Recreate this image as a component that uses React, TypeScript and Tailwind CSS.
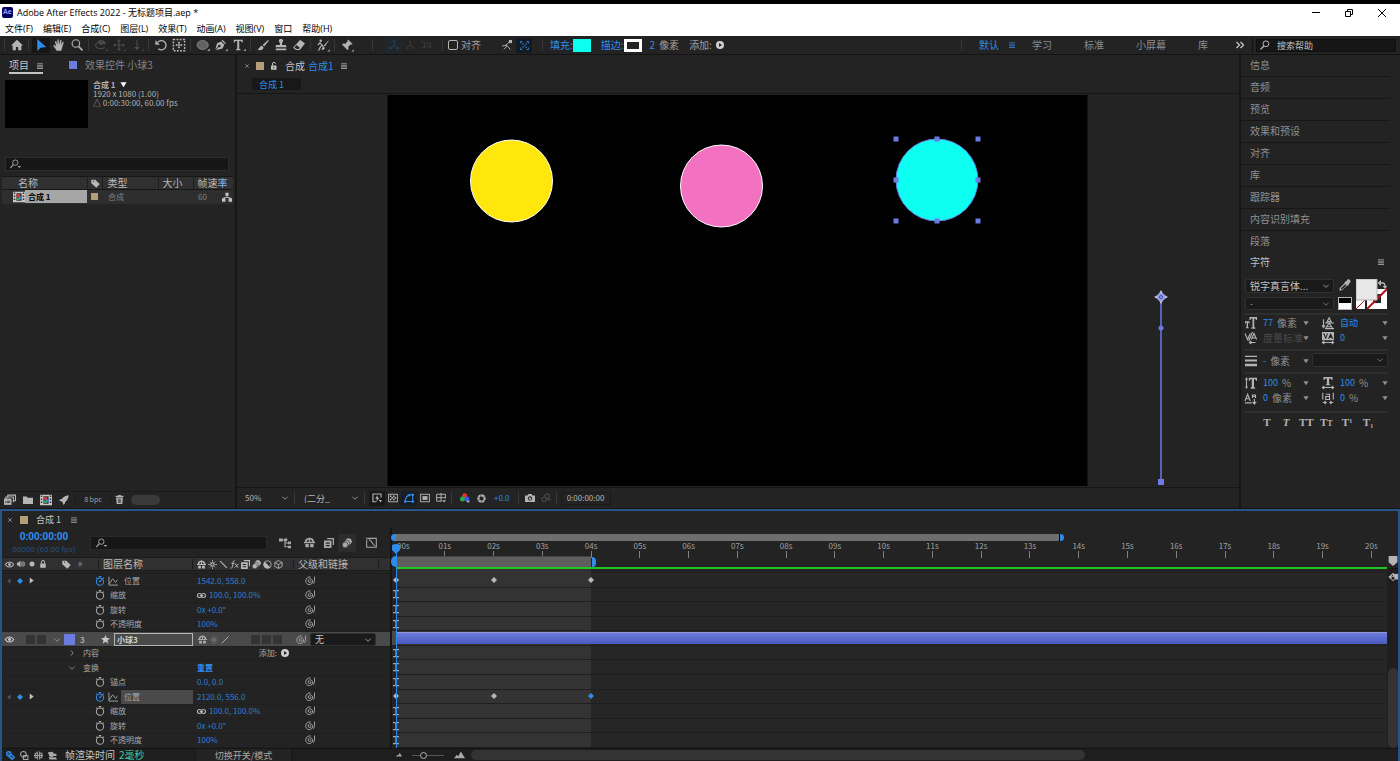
import type { ReactNode } from 'react'
import clsx from 'clsx'

// seconds visible in the timeline ruler
const SPAN = 20.32
const pct = (seconds: number) => `${(seconds / SPAN) * 100}%`

const line = { fill: 'none', stroke: 'currentColor', strokeWidth: 1.5 }

const icons: Record<string, ReactNode> = {
  home: <path d="M8 1 0 8.500h2.200V15h4.300v-4.500h3V15h4.300V8.500H16z" />,
  arrow: <path d="M3 0v16l4.500-4.500L15 10.500z" />,
  hand: (
    <path d="M5 15.500 .6 9.300c-.5-1 .8-1.700 1.600-.9L4 10 2.800 3.700c-.1-1.200 1.300-1.400 1.700-.3L6 7.500 5.800 1.300C5.900.1 7.500.1 7.600 1.300L8.200 7.200 9.600 1.700c.4-1 1.800-.7 1.700.4l-.6 5.700 2-3.800c.6-.9 1.900-.3 1.500.8L12 12.200l-1 3.300z" />
  ),
  zoom: (
    <g {...line}>
      <circle cx="6.500" cy="6" r="5" />
      <path d="m10 9.700 5.300 5.500" strokeWidth="2.200" />
    </g>
  ),
  orbit: (
    <g>
      <path d="M4 3c3-3 8-2 9 1l2-.500-2 4-4-2 1.800-.6C10 3.500 7 3 5.500 5zM8 8a3 2 0 1 1 .1 0z" />
      <path {...line} d="M5.500 4.500C1 5 0 8 1.500 10.500S9 13.500 13 11.500" />
      <path d="M14 16h3v-3z" />
    </g>
  ),
  pan: <path d="M8 0 5.500 3h1.700v4.200H3V5.500L0 8l3 2.500V8.800h4.200V13H5.500L8 16l2.500-3H8.800V8.800H13v1.700L16 8l-3-2.500v1.700H8.800V3h1.700zM14 16h3v-3z" />,
  dolly: <path d="M7.200 1h1.600v9.500H12L8 15l-4-4.500h3.200zM14 16h3v-3z" />,
  rotate: (
    <g>
      <path {...line} strokeWidth="1.700" d="M3.500 4.500A6.200 6.200 0 1 1 4.500 13" />
      <path d="M.5 1.500v6h6z" />
    </g>
  ),
  anchor: (
    <g>
      <rect x="0.500" y="0.500" width="15" height="15" {...line} strokeWidth="2" strokeDasharray="2.500 1.700" />
      <path d="m8 3 1.800 2.200H8.700v2.100h2.100V6.200L13 8l-2.200 1.800V8.700H8.700v2.100h1.100L8 13l-1.800-2.200h1.100V8.700H5.200v1.100L3 8l2.200-1.800v1.100h2.100V5.200H6.200z" />
    </g>
  ),
  ellipse: (
    <g>
      <ellipse cx="7.500" cy="8" rx="7.500" ry="6" fill="#626262" stroke="#8c8c8c" />
      <path d="M13.500 16H17v-3.500z" />
    </g>
  ),
  pen: <path d="m10 1 4.500 4.500-1.300 1.300-4.500-4.500zM8 3.200 12.500 7.500 10 12.500 1 15l4-4.200a1.700 1.700 0 1 0-.8-.8L.5 14 2.700 5.800zM14 16h3v-3z" />,
  text: <path d="M1 1h12v3.500h-1.200C11.500 3 11 2.600 8.300 2.600v10.200c0 .7.5.9 1.700 1V15H4v-1.200c1.200-.1 1.700-.3 1.700-1V2.600C3 2.600 2.500 3 2.200 4.500H1zM14 16h3v-3z" />,
  brush: <path d="M15.500.5 7.500 8l2 2 6-7.500zM6.500 9c-2.500 0-2.500 3-6 5 4 2 8 .5 8.200-3z" />,
  stamp: <path d="M8 0c3.500 0 3.500 3.300 1.500 5v3H14c1 0 1.200 2 1.200 3H.8c0-1 .2-3 1.200-3h4.500V5C4.500 3.300 4.500 0 8 0zM1 12.500h14V15H1z" />,
  eraser: <path d="M9.500 1 16 6l-7 8.500H4L0 11.500zM4.500 8 2 11.200 5 13.400h2.600l1.400-1.900z" fillRule="evenodd" />,
  roto: (
    <g>
      <circle cx="5" cy="2.300" r="1.700" />
      <path {...line} d="m1 8 3-3 2.500 3-2.500 3.500-2 4M6.500 8l2 2" />
      <path d="M15.500 1.500 9 8.500l1.500 1.500 5-7.500zM8.500 10c-1.500.5-1 3-3 4 3 .8 5-.5 5-2.500zM14 16.500h3v-3z" />
    </g>
  ),
  pin: <path d="m9.500.5 6 6-1.500 1-1-.5-3.300 3.300.3 3.200-1.500 1L5 11l-4.500 4.500L5 11 1.500 7.500l1-1.500 3.200.3L9 3l-.5-1zM14 16.500h3v-3z" />,
  axis: <path {...line} d="M8 9V1M8 9l-6.500 5M8 9l6.500 5M6 3l2-2 2 2M1.500 11v3h3M14.500 11v3h-3" />,
  axisWorld: <path {...line} d="M8 8V2M8 8l-5 4M8 8l5 4M6.500 2h3M1 13h4M11 13h4" />,
  axisView: <path {...line} d="M6 5h9v7l-5-2-4 3zM1 1l5 4M1 13l5-4M1 1v3" />,
  snapTo: (
    <g>
      <path {...line} d="M0 9.500c5 0 8-2 11-6M5 8.500c5 1 6 3 8 7M3 15l5-5.500" />
      <path d="M11 0h5v5h-5z" />
    </g>
  ),
  snapBox: (
    <g>
      <path {...line} strokeWidth="2" d="M1 4.500V1h3.500M11.500 1H15v3.500M15 11.500V15h-3.500M4.500 15H1v-3.500" />
      <path d="M4 4h2.500v2.500H4zM9.500 4H12v2.500H9.500zM4 9.500h2.500V12H4zM9.500 9.500H12V12H9.500zM7 7h2v2H7z" />
    </g>
  ),
  play: <path fillRule="evenodd" d="M8 0a8 8 0 1 1 0 16A8 8 0 0 1 8 0zM6 3.800v8.400L12 8z" />,
  search: (
    <g {...line}>
      <circle cx="9.500" cy="6" r="4.600" />
      <path d="M6.300 9.500.8 15" strokeWidth="2" />
    </g>
  ),
  searchMenu: (
    <g>
      <circle cx="8.500" cy="5.800" r="4.300" {...line} />
      <path {...line} strokeWidth="1.800" d="m5.300 9-4.800 5.500" />
      <path d="M12 11h6l-3 3.200z" />
    </g>
  ),
  menu: <path d="M0 1h16v2.200H0zM0 6.900h16v2.200H0zM0 12.800h16V15H0z" />,
  close: <path {...line} strokeWidth="3" d="m1 1 14 14M15 1 1 15" />,
  lock: (
    <g>
      <path d="M2.500 7h11v8.500h-11z" />
      <path {...line} strokeWidth="2" d="M4.800 7V4a3.200 3.200 0 0 1 6.400 0v3" />
    </g>
  ),
  unlock: (
    <g>
      <path fillRule="evenodd" d="M2 7h11v8.500H2zM6.800 9.500v3.500h1.600V9.500z" />
      <path {...line} strokeWidth="2" d="M5 7V4a3 3 0 0 1 6-.5" />
    </g>
  ),
  tag: <path fillRule="evenodd" d="M.5 1.500h7L15.500 9l-6 6.500L.5 7.500zM3.500 3v2h2V3z" />,
  comp: (
    <g>
      <path d="M0 1h16v14H0z" fill="#c8c8c8" />
      <path d="M1 2h2v2H1zM1 6h2v2H1zM1 10h2v2H1zM13 2h2v2h-2zM13 6h2v2h-2zM13 10h2v2h-2zM4.500 3h7v10h-7z" fill="#333" />
      <circle cx="7" cy="6" r="2.500" fill="#d63a3a" />
      <path d="M8 7h4v4H8z" fill="#3d7fd6" />
      <path d="M5 9h4v3H5z" fill="#3aa85a" />
    </g>
  ),
  flow: <path d="M5.500 1h5v5H8.700v2.200h4.800V10H16v5.500h-5.500V10h1.300V9.700H4.200v.3h1.300v5.500H0V10h2.500V8.200h4.800V6H5.500z" />,
  interpret: (
    <g>
      <path {...line} d="M5 5V1.500h10.300V9H12M2.500 7V4h10v7" />
      <path d="M0 6h10v8.500H0z" />
      <path d="M2 9h1v3H2zM4 9h4v1H4zM4 11h4v1H4z" fill="#232323" />
    </g>
  ),
  folder: <path d="M0 2.500h6l1.500 2H16v10H0z" />,
  rocket: <path d="M15.500.5C10 1 7 3 5 6L1.500 7l-1 2.500 3.200.3 2.500 2.500.3 3.200 2.500-1L10 11c3-2 5-5 5.500-10.500z" />,
  trash: (
    <g>
      <path d="M5.500 0h5v1.500H15v2H1v-2h4.500z" />
      <path fillRule="evenodd" d="M2 4.500h12L13 16H3zM5 6l.5 8h1L6 6zM7.500 6v8h1V6zM10 6l-.5 8h1L11 6z" />
    </g>
  ),
  chevron: <path {...line} d="m1 4.500 7 7 7-7" strokeWidth="2" />,
  chevronRight: <path {...line} d="m5 1 6 7-6 7" strokeWidth="2" />,
  down: <path d="M1 3h14L8 14z" />,
  preview: (
    <g>
      <path {...line} strokeWidth="1.800" d="M7 14H1.500V1.500h13V7" />
      <path d="M9 3 5 9h3l-1 5 5-6.500H9zM11 11h5l-2.500 4z" />
    </g>
  ),
  grid: (
    <g>
      <rect x="1" y="2" width="14" height="12" {...line} />
      <path d="M3 4h2.500v2.500H3zM8 4h2.500v2.500H8zM5.500 6.500H8V9H5.500zM10.500 6.500H13V9h-2.500zM3 9h2.500v2.500H3zM8 9h2.500v2.500H8z" />
    </g>
  ),
  mask: (
    <g>
      <path {...line} strokeWidth="1.700" d="M2 13.500C2.500 7 5 4 9 3h5v10.500z" />
      <path d="M0 12h3.500v3.500H0zM12.500 12H16v3.500h-3.500zM12.500 1H16v3.500h-3.500zM6 2h3.500v3H6z" />
    </g>
  ),
  region: (
    <g>
      <rect x="1" y="2" width="14" height="12" {...line} />
      <path d="M4 5h8v6H4z" />
    </g>
  ),
  guides: (
    <g>
      <path {...line} d="M9 13H1V2h14v7M1 7.500h14M8 0v14" />
      <path d="M10 11.500h6L13 15z" />
    </g>
  ),
  rgb: (
    <g>
      <circle cx="7.500" cy="4.200" r="4" fill="#e0352b" />
      <circle cx="4" cy="9.500" r="4" fill="#27b04a" />
      <circle cx="11" cy="9.500" r="4" fill="#3a5be0" />
      <path d="M10 12.500h6L13 16z" />
    </g>
  ),
  aperture: (
    <g>
      <circle cx="8" cy="8" r="5.500" fill="none" stroke="currentColor" strokeWidth="4" />
      <path d="M8 0 6 5M15 5l-5 1M15 12l-4-2M7 16l2-5M1 11l5-1M1 4l4 3" stroke="#232323" />
    </g>
  ),
  camera: <path fillRule="evenodd" d="M0 4h4l1.500-2.500h5L12 4h4v10.500H0zM8 5.300a3.500 3.500 0 1 0 .01 0zM8 7a1.900 1.900 0 1 1-.01 0z" />,
  snapshot: (
    <g {...line} strokeWidth="2">
      <circle cx="5" cy="10" r="3.500" />
      <circle cx="10" cy="5" r="3.500" />
      <path d="M10 10h4v3" />
    </g>
  ),
  flowchart: (
    <g>
      <path {...line} d="M3 4h6M9 8h4M8 4v4h5M8 8v5h5" />
      <path d="M0 2h5v4H0zM7 2h4v3.500H7zM12 6h4v3.500h-4zM12 11.500h4V15h-4z" />
    </g>
  ),
  shy: (
    <g>
      <path d="M1 7C2 2 5 1 8 1s6 1 7 6h-3c-.5-2-1-3-3-3.500V7H7V3.500C5 4 4.500 5 4 7z" />
      <path d="M0 7h16v2H0zM2 10h5v5H2zM9 10h5v5H9z" />
    </g>
  ),
  blend: (
    <g>
      <path d="M5 0h11v11h-2V2H5zM0 4h12v12H0z" />
      <path d="M3 7h6v2H3zM3 11h6v2H3z" fill="#232323" />
    </g>
  ),
  blur: (
    <g {...line}>
      <circle cx="10.500" cy="5.500" r="4.500" fill="currentColor" />
      <circle cx="7.500" cy="8.500" r="4.700" stroke="#333" strokeWidth="1" fill="currentColor" />
      <circle cx="5" cy="11" r="4.500" stroke="#333" strokeWidth="1" fill="currentColor" />
    </g>
  ),
  graph: (
    <g {...line}>
      <path d="M3 2h12v13H1V4" />
      <path d="M4 4c6 0 4 8 10 9M0 1l3 2" />
    </g>
  ),
  eye: (
    <g>
      <path {...line} d="M.5 8C4 2 12 2 15.500 8 12 14 4 14 .5 8z" strokeWidth="1.800" />
      <circle cx="8" cy="8" r="2.500" />
    </g>
  ),
  audio: (
    <g>
      <path d="M0 5h3l4-4v14l-4-4H0z" />
      <path {...line} d="M9.500 4v8M12 2v12M14.500 4v8" />
    </g>
  ),
  dot: <circle cx="8" cy="8" r="5" />,
  sun: (
    <g>
      <circle cx="8" cy="8" r="3" {...line} strokeWidth="2" />
      <path {...line} d="M8 0v3M8 13v3M0 8h3M13 8h3M3 3l1.500 1.500M11.500 11.500 13 13M3 13l1.500-1.500M11.500 4.500 13 3" />
    </g>
  ),
  backslash: <path {...line} strokeWidth="2" d="m2 2 12 12" />,
  slash: <path {...line} strokeWidth="2" d="M1 15 15 1" />,
  fx: <path {...line} strokeWidth="1.700" d="M8.500 1.500C5.500.5 5.500 4 5 8s-1 7-4 6.500M2.500 6H8M8.500 7c3-1 3 7 6.500 6M15 7l-6.500 6.500" />,
  adjust: (
    <g>
      <circle cx="8" cy="8" r="6.700" {...line} />
      <path d="M3.200 3.200a6.700 6.700 0 0 0 9.600 9.600z" />
    </g>
  ),
  cube: <path {...line} d="m8 1 6.500 3.500v7L8 15l-6.500-3.500v-7zM1.500 4.500 8 8l6.500-3.500M8 8v7" />,
  stopwatch: (
    <g {...line} strokeWidth="1.700">
      <circle cx="8" cy="9" r="5.800" />
      <path d="M6 1h4M2 2.500l2 2M14 2.500l-2 2" />
    </g>
  ),
  stopwatchOn: (
    <g {...line} strokeWidth="1.700">
      <circle cx="8" cy="9" r="5.800" />
      <path d="M6 1h4M2 2.500l2 2M14 2.500l-2 2M8 9.500l3-4M8 9.500 6.500 8" />
    </g>
  ),
  curve: <path {...line} d="M1.500 1v13.500H16M1.500 12C5 12 5 5 7.500 5s2.500 5 4.500 5 1.500-3 3-4" />,
  swirl: <path {...line} strokeWidth="1.500" d="M7.500 8c.8-1 2.500.2 1.800 1.600-1 1.800-4 1-4.200-1.400C5 5 8.500 3.600 10.800 5.500c2.400 2.200 1.400 6.500-1.800 7.800-4 1.500-8-1.500-7.800-5.600C1.500 3.500 5 1 9 1.500M15.200 1v5.500c0 2.500-.7 4.500-2 6" />,
  chain: (
    <g {...line} strokeWidth="2">
      <ellipse cx="4.500" cy="8" rx="3.700" ry="3.500" />
      <ellipse cx="11.500" cy="8" rx="3.700" ry="3.500" />
      <path d="M5 8h6" />
    </g>
  ),
  diamond: <path d="m8 0 8 8-8 8-8-8z" />,
  prev: <path d="M12 1v14L3 8z" />,
  next: <path d="M4 1v14l9-7z" />,
  star: <path d="m8 0 2.200 5.500 5.800.4-4.500 3.700L13 15.500 8 12.200 3 15.500l1.500-5.900L0 5.900l5.800-.4z" />,
  layers: (
    <g {...line} strokeWidth="2">
      <circle cx="5" cy="5" r="4" fill="#2d8ceb" fillOpacity=".4" />
      <path d="M5 10c0-3 3-5 6-3l4 4-4 4zM8 10l4 4M11 8l3 3" />
    </g>
  ),
  switches: (
    <g {...line} strokeWidth="1.800">
      <circle cx="6" cy="6" r="5" />
      <path d="M6 8h8v7H6z" />
    </g>
  ),
  inout: (
    <g {...line} strokeWidth="1.800">
      <path d="M6 1v14M10 1v14M6 4H2v8h4M10 4h4v8h-4M0 8h16" />
    </g>
  ),
  render: (
    <g>
      <circle cx="6" cy="6" r="4.500" />
      <path d="M0 2h4v3H0zM9 5h6v4H9zM1 11h13l2 4H3z" />
    </g>
  ),
  mountain: <path d="m0 12 4-5 2 2 4-7 6 10z" />,
  marker: <path d="M1 0h14v10l-7 6-7-6z" />,
  markerBin: (
    <g>
      <path {...line} strokeWidth="2" d="M9 2 2 8l7 6M4 8h5" />
      <path d="M8 3h8v9H8z" />
      <circle cx="8" cy="10" r="3" fill="#232323" stroke="currentColor" />
    </g>
  ),
  ibeam: <path {...line} strokeWidth="2.500" d="M2 1h12M2 15h12M8 1v14" />,
  dropper: <path d="M11 1c2-2 5.500 1 4 3.500L12.500 7l.8.8-1.300 1.300-.9-.8L4 15l-3.500.8L1 12l7-7-.8-.8 1.300-1.300.8.8zM3 12l-.5 2 2-.5 5.300-5.200L8.500 7z" />,
  fontSize: <path d="M6 0h10v4h-1.500c-.2-1.500-.5-2-2.200-2v11.500l1.500.5v1.500H8.500V14l1.500-.5V2C8 2 7.700 2.500 7.500 4H6zM0 5.500h6v3H5c0-1-.5-1.200-1-1.200v6.200l1 .5v1H1.200v-1l1-.5V7.300C1.500 7.300 1 7.500 1 8.500H0z" />,
  leading: (
    <g {...line}>
      <path d="m6 8 3.500-7L13 8M7 6h5M5 15l4.500-7L14 15M6.500 13h6M2 3v10M0 11l2 3 2-3M4 8h12M4 15.500h12" />
    </g>
  ),
  kerning: (
    <g {...line}>
      <path d="m0 2 3.500 8L7 2M15.500 10 12 2l-3.500 8M9.500 8h5M10 0 5 12M14 14H6M8.500 12 6 14l2.500 2" />
    </g>
  ),
  tracking: (
    <g>
      <path fillRule="evenodd" d="M0 0h16v11H0zM1.500 2l3 7h1l2.500-7H6.500L5 7 3.500 2zM11 2 8 9h1.500l.7-1.500h2.300L13 9h2l-3-7z" />
      <path {...line} d="M1 14h14M3 12l-2.500 2L3 16M13 12l2.500 2-2.500 2" />
    </g>
  ),
  strokeWidth: <path d="M0 1h16v1.500H0zM0 6h16v2.500H0zM0 11.500h16V15H0z" />,
  vScale: <path d="M5 1h11v4h-1.300c-.2-1.500-.7-2-2.700-2v10.500l1.500.5v1.500h-6V14l1.500-.5V3C7 3 6.500 3.500 6.300 5H5zM2 0l2 3.500H2.700v9H4L2 16 0 12.500h1.300v-9H0z" />,
  hScale: (
    <g>
      <path d="M2 0h12v4h-1.300c-.2-1.500-.9-2-3.200-2v7.500l1.500.5v1H5V10l1.500-.5V2C4.200 2 3.500 2.500 3.300 4H2z" />
      <path {...line} d="M1 14h14M3 12l-2.500 2L3 16M13 12l2.500 2-2.500 2" />
    </g>
  ),
  baseline: <path {...line} d="m0 12 3.500-9L7 12M1.500 9h4M0 14.500h9M10 8V4h4v4M10 6h3M12.500 9v7M10 13l2.500 3 2.500-3" />,
  tsume: (
    <g {...line}>
      <path d="M1 1v9M15 1v9M5 3h5v7M10 6H5v4h6M1 14h4M15 14h-4M3.500 12l2 2-2 2M12.500 12l-2 2 2 2" />
    </g>
  ),
}

function Icon({ name, className = 'size-3' }: { name: string; className?: string }) {
  return (
    <svg viewBox="0 0 16 16" fill="currentColor" aria-hidden="true" className={clsx('shrink-0 overflow-visible', className)}>
      {icons[name]}
    </svg>
  )
}

function IconButton({ name, label, className, icon }: { name: string; label: string; className?: string; icon?: string }) {
  return (
    <button type="button" aria-label={label} className={clsx('flex shrink-0 items-center justify-center', className)}>
      <Icon name={name} className={icon} />
    </button>
  )
}

function Select({ label, value, className }: { label: string; value: string; className?: string }) {
  return (
    <div className={clsx('relative shrink-0 rounded-xs border border-[#303030] bg-[#1a1a1a]', className)}>
      <select aria-label={label} className="block size-full appearance-none bg-transparent px-1 leading-none outline-none">
        <option>{value}</option>
      </select>
      <Icon name="chevron" className="pointer-events-none absolute top-1/2 right-1 size-1.5 -translate-y-1/2" />
    </div>
  )
}

function Sep() {
  return <div className="mr-[3px] ml-0.5 h-3 w-px shrink-0 bg-[#383838]" />
}

const menus = ['文件(F)', '编辑(E)', '合成(C)', '图层(L)', '效果(T)', '动画(A)', '视图(V)', '窗口', '帮助(H)']

function TitleBar() {
  return (
    <header className="shrink-0 border-t-4 border-black bg-white font-['Open_Sans','Noto_Sans_CJK_SC',sans-serif] text-[9px] text-black">
      <div className="flex h-[17px] items-center">
        <div className="ml-0.5 flex h-[11px] w-[11px] items-center justify-center rounded-xs bg-[#00005b] text-[7px] font-bold text-[#9999ff]">Ae</div>
        <h1 className="ml-1 leading-none">Adobe After Effects 2022 - 无标题项目.aep *</h1>
        <div className="ml-auto flex w-[88px] items-center justify-between pr-3.5">
          <button type="button" aria-label="最小化" className="h-px w-2 bg-black" />
          <button type="button" aria-label="还原">
            <svg viewBox="0 0 8 8" className="size-2" fill="none" stroke="#000">
              <path d="M.5 2.500h5v5h-5zM2.500 2V.5h5v5H6" />
            </svg>
          </button>
          <button type="button" aria-label="关闭">
            <svg viewBox="0 0 8 8" className="size-2" fill="none" stroke="#000">
              <path d="m0 0 8 8M8 0 0 8" />
            </svg>
          </button>
        </div>
      </div>
      <nav className="flex h-[15px] items-center gap-[10px] pl-[5px] leading-none">
        {menus.map((m) => (
          <button type="button" key={m}>{m}</button>
        ))}
      </nav>
    </header>
  )
}

const toolGroups = [
  [['home', '主页']],
  [['arrow', '选取'], ['hand', '手形'], ['zoom', '缩放']],
  [['orbit', '绕光标旋转'], ['pan', '平移'], ['dolly', '推拉']],
  [['rotate', '旋转'], ['anchor', '锚点']],
  [['ellipse', '椭圆'], ['pen', '钢笔'], ['text', '文字']],
  [['brush', '画笔'], ['stamp', '仿制图章'], ['eraser', '橡皮擦']],
  [['roto', 'Roto 笔刷']],
  [['pin', '人偶位置控点']],
]

function Toolbar() {
  return (
    <div className="flex h-[19px] shrink-0 items-center border-b border-[#131313] bg-[#232323] pl-0.5 text-[10px] leading-none">
      {toolGroups.map((group, i) => (
        <div key={i} className="flex items-center">
          <Sep />
          {group.map(([name, label]) => (
            <IconButton
              key={name}
              name={name}
              label={label}
              icon="size-3"
              className={clsx(
                'h-[15px] w-[18px]',
                name === 'arrow' ? 'bg-[#161616] text-[#2d8ceb]' : i === 2 ? 'text-[#4a4a4a]' : 'text-[#b4b4b4]',
              )}
            />
          ))}
        </div>
      ))}
      <div className="ml-3.5 flex items-center">
        <Sep />
        <div className="ml-[10px] flex text-[#3c3c3c]">
          <IconButton name="axis" label="本地轴" icon="size-[10px]" className="h-[15px] w-4 bg-[#1f262c] text-[#2b4358]" />
          <IconButton name="axisWorld" label="世界轴" icon="size-[10px]" className="h-[15px] w-4" />
          <IconButton name="axisView" label="视图轴" icon="size-[10px]" className="h-[15px] w-4" />
        </div>
      </div>
      <div className="ml-1.5 flex items-center">
        <Sep />
        <input id="snap" type="checkbox" className="ml-0.5 size-[10px] appearance-none rounded-xs border border-[#b4b4b4]" />
        <label htmlFor="snap" className="ml-[3px] text-[#a0a0a0]">对齐</label>
        <IconButton name="snapTo" label="对齐到边缘" icon="size-[10px]" className="ml-[17px] h-[15px] w-[18px] text-[#b4b4b4]" />
        <IconButton name="snapBox" label="对齐到要素" icon="size-[9px]" className="h-[15px] w-4 bg-[#151a20] text-[#2d6fb5]" />
      </div>
      <div className="ml-2 flex items-center text-[#a0a0a0]">
        <Sep />
        <span className="ml-1 text-[#2d8ceb]">填充:</span>
        <button type="button" aria-label="填充颜色" className="h-[13px] w-[18px] bg-[#0cfff0]" />
        <span className="ml-[10px] text-[#2d8ceb]">描边:</span>
        <button type="button" aria-label="描边颜色" className="h-[13px] w-[18px] border-[3px] border-white bg-[#232323]" />
        <span className="ml-2 text-[#2d8ceb]">2</span>
        <span className="ml-1">像素</span>
        <span className="ml-[10px]">添加:</span>
        <IconButton name="play" label="添加" icon="size-2" className="ml-1 text-[#d0d0d0]" />
      </div>
      <div className="ml-auto flex items-center text-[#8c8c8c]">
        <Sep />
        <button type="button" className="ml-3.5 text-[#2d8ceb]">默认</button>
        <IconButton name="menu" label="工作区菜单" icon="size-1.5" className="ml-2.5 text-[#2d8ceb]" />
        <button type="button" className="ml-[17px]">学习</button>
        <button type="button" className="ml-8">标准</button>
        <button type="button" className="ml-8">小屏幕</button>
        <button type="button" className="ml-8">库</button>
        <button type="button" aria-label="更多" className="ml-7 text-[#c8c8c8]">
          <svg viewBox="0 0 8 8" className="size-2" fill="none" stroke="currentColor" strokeWidth="1.300">
            <path d="m.5 1 3 3-3 3M4.500 1l3 3-3 3" />
          </svg>
        </button>
        <div className="ml-2 h-[15px] w-px bg-[#141414]" />
        <label className="mr-1 ml-[3px] flex h-[13px] w-[140px] items-center gap-[7px] border border-[#101010] bg-[#161616] px-[3px] text-[9px] text-[#c0c0c0]">
          <Icon name="search" className="size-2.5" />
          <input aria-label="搜索帮助" placeholder="搜索帮助" className="w-full min-w-0 bg-transparent leading-none outline-none placeholder:text-[#c0c0c0]" />
        </label>
      </div>
    </div>
  )
}

function ProjectPanel() {
  return (
    <section className="flex w-[237px] shrink-0 flex-col border-r-2 border-[#161616] bg-[#232323] text-[#a0a0a0]">
      <div className="flex h-[21px] items-start pt-[3px] pl-[9px] text-[10px] leading-none">
        <div className="flex h-4 w-[34px] items-start justify-between border-b-2 border-[#c4c4c4] pt-0.5 text-[#c4c4c4]">
          <button type="button">项目</button>
          <IconButton name="menu" label="面板菜单" icon="size-1.5" className="mt-[3px]" />
        </div>
        <div className="mt-[3px] ml-[26px] size-2 bg-[#6b7be0]" />
        <button type="button" className="mt-0.5 ml-2 text-[#858585]">效果控件 小球3</button>
      </div>
      <div className="flex gap-[5px] pt-1 pl-[5px]">
        <div className="h-12 w-[83px] bg-black" />
        <div className="text-[8px] leading-[9px] text-[#b0b0b0]">
          <p className="flex items-center gap-1 font-bold">
            合成 1 <Icon name="down" className="size-[7px] text-white" />
          </p>
          <p>1920 x 1080 (1.00)</p>
          <p>△ 0:00:30:00, 60.00 fps</p>
        </div>
      </div>
      <label className="mt-[29px] mr-[6px] ml-[5px] flex h-[14px] items-center gap-2 border border-[#2c2c2c] bg-[#161616] pl-1">
        <Icon name="searchMenu" className="size-2.5" />
        <input aria-label="搜索项目" className="w-full min-w-0 bg-transparent text-[9px] leading-none outline-none" />
      </label>
      <table className="mt-[5px] ml-0.5 w-[231px] table-fixed border-t border-[#161616] text-left text-[10px] leading-none">
        <thead className="bg-[#303030]">
          <tr className="h-[13px] text-[#b8b8b8]">
            <th className="w-[85px] py-0 pl-4 font-normal">名称</th>
            <th className="w-[15px] border-l border-[#1d1d1d]" aria-label="标签"><Icon name="tag" className="ml-[3px] size-[9px]" /></th>
            <th className="w-[56px] border-l border-[#1d1d1d] pl-[5px] font-normal">类型</th>
            <th className="w-[35px] border-l border-[#1d1d1d] pl-1 font-normal">大小</th>
            <th className="border-l border-[#1d1d1d] pl-1 font-normal">帧速<span className="text-[#7fb4ee]">率</span></th>
          </tr>
        </thead>
        <tbody className="border-t border-[#161616] bg-[#2e2e2e] text-[8px]">
          <tr className="h-[14px]">
            <td className="p-0">
              <div className="flex items-center pl-[11px]">
                <Icon name="comp" className="size-3" />
                <span className="flex h-[13px] flex-1 items-center bg-[#a6a6a6] pl-[3px] font-bold text-black">合成 1</span>
              </div>
            </td>
            <td><div className="ml-1 size-[7px] bg-[#b59f78]" /></td>
            <td className="pl-1.5 text-[#808080]">合成</td>
            <td />
            <td className="pl-0.5">
              <div className="flex items-center justify-between pl-[3px] text-[#808080]">
                60 <Icon name="flow" className="mr-px size-[10px] text-[#c4c4c4]" />
              </div>
            </td>
          </tr>
        </tbody>
      </table>
      <div className="mt-auto flex h-[17px] shrink-0 items-center border-t border-[#1b1b1b] pb-px pl-1 text-[#b4b4b4]">
        <IconButton name="interpret" label="解释素材" icon="size-3" className="w-3" />
        <IconButton name="folder" label="新建文件夹" icon="size-2.5" className="ml-[7px]" />
        <IconButton name="comp" label="新建合成" icon="size-3" className="ml-[7px]" />
        <IconButton name="rocket" label="项目设置" icon="size-2.5" className="ml-[7px]" />
        <button type="button" className="ml-1.5 h-[13px] w-[36px] border-x border-[#1b1b1b] text-[7px] leading-none text-[#a0a0a0]">8 bpc</button>
        <IconButton name="trash" label="删除" icon="size-[9px]" className="ml-1" />
        <div className="ml-[7px] h-2.5 w-[29px] rounded-full bg-[#3a3a3a]" />
      </div>
    </section>
  )
}

const handles = [
  [659, 45], [700, 45], [741, 45],
  [659, 86], [741, 86],
  [659, 127], [700, 127], [741, 127],
]

function Viewer() {
  return (
    <section className="flex min-w-0 flex-1 flex-col bg-[#232323] text-[10px] leading-none">
      <div className="flex h-[21px] shrink-0 items-center pl-2 text-[#c4c4c4]">
        <IconButton name="close" label="关闭合成" icon="size-1" className="text-[#909090]" />
        <div className="ml-[7px] size-2 bg-[#b59f78]" />
        <Icon name="unlock" className="ml-[6px] size-2" />
        <span className="ml-[7px]">合成</span>
        <a href="#comp" className="ml-[3px] text-[#2d8ceb]">合成1</a>
        <IconButton name="menu" label="合成菜单" icon="size-1.5" className="ml-[7px]" />
      </div>
      <div className="flex h-[18px] shrink-0 items-start border-b border-[#161616] pt-0.5 pl-[15px]">
        <button type="button" className="h-3 w-[49px] bg-[#181818] pl-[7px] text-left text-[9px] leading-none text-[#2d8ceb]">合成 1</button>
      </div>
      <svg viewBox="0 0 1002 393" className="min-h-0 w-full flex-1" aria-label="合成预览">
        <rect x="150.500" y="1" width="700" height="391" fill="#000" />
        <circle cx="274.500" cy="87" r="41" fill="#ffe60c" stroke="#fff" />
        <circle cx="484.500" cy="92" r="41" fill="#f371c1" stroke="#fff" />
        <circle cx="700" cy="86" r="41" fill="#0cfff0" stroke="#6b7be0" />
        {handles.map(([x, y]) => (
          <rect key={`${x}-${y}`} x={x - 2.5} y={y - 2.5} width="5" height="5" fill="#6b7be0" />
        ))}
        <path d="M924 204v184" stroke="#6b7be0" strokeWidth="1.500" />
        <circle cx="924" cy="234" r="2.500" fill="#6b7be0" />
        <rect x="921" y="385" width="6" height="6" fill="#6b7be0" />
        <path d="m924 196 2.500 4.500L931 203l-4.500 2.500L924 210l-2.500-4.500L917 203l4.500-2.500z" fill="#c0c4e0" />
        <circle cx="924" cy="203" r="4" fill="#8f9be8" />
        <circle cx="924" cy="203" r="1.500" fill="none" stroke="#4a58a8" />
      </svg>
      <div className="flex h-[21px] shrink-0 items-center border-t border-[#161616] pl-1 text-[9px] text-[#b4b4b4]">
        <Select label="放大率" value="50%" className="h-[15px] w-[51px] border-0 bg-transparent text-[8px]" />
        <Sep />
        <Select label="分辨率" value="(二分_" className="ml-0.5 h-[15px] w-[62px] border-0 bg-transparent text-[9px]" />
        <Sep />
        <IconButton name="preview" label="快速预览" icon="size-2.5" className="ml-px h-[15px] w-4 bg-[#171717]" />
        <IconButton name="grid" label="透明网格" icon="size-2.5" className="w-4" />
        <IconButton name="mask" label="蒙版可见性" icon="size-2.5" className="h-[15px] w-4 bg-[#171d24] text-[#2d8ceb]" />
        <IconButton name="region" label="目标区域" icon="size-2.5" className="w-4" />
        <IconButton name="guides" label="参考线" icon="size-2.5" className="w-4" />
        <Sep />
        <IconButton name="rgb" label="通道" icon="size-2.5" className="ml-0.5 w-4" />
        <IconButton name="aperture" label="重置曝光" icon="size-[9px]" className="w-4" />
        <span className="ml-[5px] text-[8px] text-[#2d8ceb]">+0.0</span>
        <div className="ml-1.5"><Sep /></div>
        <IconButton name="camera" label="拍摄快照" icon="size-2.5" className="w-4" />
        <IconButton name="snapshot" label="显示快照" icon="size-2.5" className="w-4 text-[#444]" />
        <Sep />
        <button type="button" className="ml-px h-[13px] w-[50px] border border-[#1a1a1a] text-[8px] leading-none">0:00:00:00</button>
      </div>
    </section>
  )
}

const panels = ['信息', '音频', '预览', '效果和预设', '对齐', '库', '跟踪器', '内容识别填充', '段落']

function Field({ icon, value, unit, dim }: { icon: string; value: string; unit?: string; dim?: boolean }) {
  return (
    <div className="flex h-[15px] items-center">
      <Icon name={icon} className="size-3 text-[#b4b4b4]" />
      <span className={clsx('ml-1.5', dim ? 'text-[10px] text-[#4a4a4a]' : 'text-[9px] text-[#2d8ceb]')}>{value}</span>
      {unit && <span className="ml-1 text-[10px] text-[#909090]">{unit}</span>}
      <Icon name="down" className="ml-auto size-1.5 text-[#909090]" />
    </div>
  )
}

function SidePanels() {
  return (
    <aside className="w-[161px] shrink-0 border-l-2 border-[#161616] bg-[#232323] text-[10px] leading-none text-[#909090]">
      {panels.map((p) => (
        <button type="button" key={p} className="mr-2.5 block h-[22px] w-[149px] border-b border-[#171717] pb-0.5 pl-[9px] text-left last-of-type:border-0">
          {p}
        </button>
      ))}
      <div className="flex h-5 items-center justify-between pr-4 pb-0.5 pl-[9px] text-[#c0c0c0]">
        字符 <IconButton name="menu" label="字符菜单" icon="size-1.5" />
      </div>
      <div className="pr-3 pl-1">
        <div className="flex gap-1 pt-1.5">
          <div className="flex flex-col gap-1">
            <Select label="字体" value="锐字真言体..." className="h-[14px] w-[89px] text-[10px] text-[#c0c0c0]" />
            <Select label="字体样式" value="-" className="h-[13px] w-[89px] text-[9px]" />
          </div>
          <div className="flex flex-col items-center gap-1.5 text-[#b4b4b4]">
            <IconButton name="dropper" label="吸管" icon="size-3" />
            <div className="h-[13px] w-[14px] border border-[#b4b4b4] bg-linear-to-b from-black from-50% to-white to-50%" />
          </div>
          <svg viewBox="0 0 31 31" className="h-[31px] w-[31px] text-[#b4b4b4]" aria-label="填充与描边颜色">
            <path d="M11 10h20v20H11z" fill="#fff" />
            <path d="M17 15h8v9h-8z" fill="#232323" />
            <path d="m11 30 20-20" stroke="#b0121c" strokeWidth="2" />
            <path d="M0 21h9v9H0z" fill="#fff" />
            <path d="m0 30 9-9" stroke="#b0121c" />
            <path d="M0 0h21v21H0z" fill="#e8e8e8" stroke="#b4b4b4" />
            <path d="M24 4h3q2 0 2 4" fill="none" stroke="currentColor" strokeWidth="1.500" />
            <path d="M25 1v6l-3.500-3zM26.500 7h5L29 10z" fill="currentColor" />
          </svg>
        </div>
        <div className="mt-[3px] grid grid-cols-[64px_66px] justify-between border-t-2 border-[#2e2e2e] pb-1">
          <Field icon="fontSize" value="77" unit="像素" />
          <Field icon="leading" value="自动" />
          <Field icon="kerning" value="度量标准" dim />
          <Field icon="tracking" value="0" />
        </div>
        <div className="grid grid-cols-[64px_76px] justify-between border-t-2 border-[#2e2e2e] pt-0.5 pb-1">
          <Field icon="strokeWidth" value="-" unit="像素" />
          <Select label="描边方式" value="" className="h-[14px] w-[76px]" />
        </div>
        <div className="grid grid-cols-[64px_66px] justify-between border-t-2 border-[#2e2e2e] pt-px pb-1.5">
          <Field icon="vScale" value="100" unit="%" />
          <Field icon="hScale" value="100" unit="%" />
          <Field icon="baseline" value="0" unit="像素" />
          <Field icon="tsume" value="0" unit="%" />
        </div>
        <div className="flex gap-[9px] border-t-2 border-[#2e2e2e] pt-1 pl-4 font-['Liberation_Serif',serif] text-[11px] font-bold text-[#b4b4b4]">
          <button type="button" className="w-3">T</button>
          <button type="button" className="w-2 italic">T</button>
          <button type="button" className="w-3">TT</button>
          <button type="button" className="w-3">T<small className="text-[8px]">T</small></button>
          <button type="button" className="w-3">T<sup className="text-[6px]">1</sup></button>
          <button type="button" className="w-3">T<sub className="text-[6px]">1</sub></button>
        </div>
      </div>
    </aside>
  )
}

type Row =
  | { kind: 'prop'; name: string; value: string; keyed?: boolean; selected?: boolean; chain?: boolean }
  | { kind: 'group'; name: string; open?: boolean }
  | { kind: 'layer'; name: string; index: number }

const rows: Row[] = [
  { kind: 'prop', name: '位置', value: '1542.0, 558.0', keyed: true },
  { kind: 'prop', name: '缩放', value: '100.0, 100.0%', chain: true },
  { kind: 'prop', name: '旋转', value: '0x +0.0°' },
  { kind: 'prop', name: '不透明度', value: '100%' },
  { kind: 'layer', name: '小球3', index: 3 },
  { kind: 'group', name: '内容' },
  { kind: 'group', name: '变换', open: true },
  { kind: 'prop', name: '锚点', value: '0.0, 0.0' },
  { kind: 'prop', name: '位置', value: '2120.0, 556.0', keyed: true, selected: true },
  { kind: 'prop', name: '缩放', value: '100.0, 100.0%', chain: true },
  { kind: 'prop', name: '旋转', value: '0x +0.0°' },
  { kind: 'prop', name: '不透明度', value: '100%' },
]

const rowGrid = 'grid min-h-0 grid-cols-[93px_98px_107px_1fr] items-center border-b border-[#1f1f1f]'

function PropRow({ row }: { row: Extract<Row, { kind: 'prop' }> }) {
  return (
    <div className={rowGrid}>
      <div className="flex gap-[5px] pl-1">
        {row.keyed && (
          <>
            <IconButton name="prev" label="上一关键帧" icon="size-1.5" className="text-[#555]" />
            <IconButton name="diamond" label="关键帧" icon="size-1.5" className="text-[#2d8ceb]" />
            <IconButton name="next" label="下一关键帧" icon="size-[7px]" className="text-[#c0c0c0]" />
          </>
        )}
      </div>
      <div className="flex h-full items-center">
        <IconButton
          name={row.keyed ? 'stopwatchOn' : 'stopwatch'}
          label="时间变化秒表"
          icon="size-2.5"
          className={row.keyed ? 'text-[#2d8ceb]' : 'text-[#a8a8a8]'}
        />
        {row.keyed && <Icon name="curve" className="ml-[3px] size-2.5" />}
        <span className={clsx('flex h-full items-center', row.keyed ? 'ml-[3px] flex-1 pl-[3px]' : 'ml-[5px]', row.selected && 'bg-[#4a4a4a]')}>
          {row.name}
        </span>
      </div>
      <div className="flex items-center gap-[3px] pl-1 text-[#2d7fd0]">
        {row.chain && <Icon name="chain" className="size-[9px] text-[#b4b4b4]" />}
        {row.value}
      </div>
      <div className="pl-[5px]">
        <Icon name="swirl" className="size-2.5" />
      </div>
    </div>
  )
}

function LayerRow({ row }: { row: Extract<Row, { kind: 'layer' }> }) {
  return (
    <div className={clsx(rowGrid, 'bg-[#4a4a4a]')}>
      <div className="flex items-center pl-[3px]">
        <IconButton name="eye" label="显示图层" icon="size-[9px]" className="text-[#d0d0d0]" />
        <div className="ml-3 size-[9px] bg-[#333]" />
        <div className="ml-0.5 size-[9px] bg-[#333]" />
        <IconButton name="chevron" label="折叠图层" icon="size-1.5" className="ml-2" />
        <div className="ml-1 size-[11px] bg-[#6b7be0]" />
        <span className="ml-[5px] font-bold">{row.index}</span>
      </div>
      <div className="flex h-full items-center">
        <Icon name="star" className="ml-1.5 size-[9px] text-[#c8c8c8]" />
        <button type="button" className="my-px ml-1 h-[13px] flex-1 border border-[#b4b4b4] pl-0.5 text-left leading-none font-bold text-[#d0d0d0]">
          {row.name}
        </button>
      </div>
      <div className="flex items-center pl-[5px]">
        <Icon name="shy" className="size-[9px]" />
        <Icon name="sun" className="ml-[3px] size-2 text-[#808080]" />
        <Icon name="slash" className="ml-[3px] size-2" />
        <div className="ml-[22px] size-[9px] bg-[#333]" />
        <div className="ml-0.5 size-[9px] bg-[#333]" />
        <div className="ml-0.5 size-[9px] bg-[#333]" />
      </div>
      <div className="flex items-center gap-1">
        <Icon name="swirl" className="-ml-1 size-2.5" />
        <Select label="父级和链接" value="无" className="h-[13px] w-[66px] text-[9px] text-[#c4c4c4]" />
      </div>
    </div>
  )
}

function GroupRow({ row }: { row: Extract<Row, { kind: 'group' }> }) {
  return (
    <div className={rowGrid}>
      <div className="flex items-center gap-2 overflow-visible pl-[66px] whitespace-nowrap">
        <IconButton name={row.open ? 'chevron' : 'chevronRight'} label={row.name} icon="size-1.5" className="w-[7px]" />
        {row.name}
      </div>
      <div />
      {row.open ? (
        <button type="button" className="pl-1 text-left leading-none font-bold text-[#2d8ceb]">重置</button>
      ) : (
        <div className="flex items-center justify-end gap-1 pr-[11px]">
          添加: <Icon name="play" className="size-2 text-[#d0d0d0]" />
        </div>
      )}
      <div />
    </div>
  )
}

function Outline() {
  return (
    <div className="flex w-[388px] shrink-0 flex-col text-[8px] leading-none text-[#a8a8a8]">
      <div className="flex h-[29px] shrink-0 items-center">
        <div className="flex w-[84px] flex-col gap-1 text-center font-['Roboto',sans-serif] whitespace-nowrap">
          <p className="text-[10px] font-bold text-[#2d8ceb]">0:00:00:00</p>
          <p className="text-[8px] leading-none text-[#25507c]">00000 (60.00 fps)</p>
        </div>
        <label className="ml-1 flex h-[14px] w-[177px] items-center border border-[#2a2a2a] bg-[#161616] pl-[5px]">
          <Icon name="searchMenu" className="size-2.5" />
          <input aria-label="搜索图层" className="w-full min-w-0 bg-transparent pl-2 leading-none outline-none" />
        </label>
        <IconButton name="flowchart" label="合成微型流程图" icon="size-3" className="ml-3" />
        <IconButton name="shy" label="隐藏消隐图层" icon="size-[11px]" className="ml-[13px]" />
        <IconButton name="blend" label="帧混合" icon="size-2.5" className="ml-[9px]" />
        <IconButton name="blur" label="运动模糊" icon="size-2.5" className="ml-1 h-[18px] w-[18px] bg-[#2c2c2c]" />
        <IconButton name="graph" label="图表编辑器" icon="size-[11px]" className="ml-2.5" />
      </div>
      <div className="grid h-[14px] shrink-0 grid-cols-[97px_94px_101px_85px_1fr] items-center divide-x divide-[#1b1b1b] border-y border-[#1b1b1b] bg-[#303030] text-[10px] text-[#b8b8b8]">
        <div className="flex items-center gap-[3px] pl-[3px]">
          <Icon name="eye" className="size-[9px]" />
          <Icon name="audio" className="size-2" />
          <Icon name="dot" className="size-2" />
          <Icon name="lock" className="size-2" />
          <Icon name="tag" className="ml-3 size-[9px]" />
          <span className="ml-1 text-[8px] text-[#808080]">#</span>
        </div>
        <div className="pl-1">图层名称</div>
        <div className="flex items-center gap-0.5 pl-1">
          {['shy', 'sun', 'backslash', 'fx', 'blend', 'blur', 'adjust', 'cube'].map((name) => (
            <Icon key={name} name={name} className="size-[9px]" />
          ))}
        </div>
        <div className="pl-1">父级和链接</div>
        <div className="h-2.5" />
      </div>
      <div className="mt-0.5 grid min-h-0 flex-1 auto-rows-fr border-t border-[#1f1f1f]">
        {rows.map((row, i) =>
          row.kind === 'prop' ? <PropRow key={i} row={row} /> : row.kind === 'layer' ? <LayerRow key={i} row={row} /> : <GroupRow key={i} row={row} />,
        )}
      </div>
    </div>
  )
}

function Tracks() {
  return (
    <div className="relative flex min-w-0 flex-1 flex-col pt-1.5">
      <div className="flex h-[7px] shrink-0">
        <div className="-ml-[5px] w-[5px] rounded-l-full bg-[#2d8ceb]" />
        <div className="bg-[#6e6e6e]" style={{ width: pct(13.6) }} />
        <div className="w-[5px] rounded-r-full border-l border-black bg-[#2d8ceb]" />
      </div>
      <div className="relative h-[26px] shrink-0">
        <div className="flex overflow-hidden text-[8px] leading-[10px] text-[#a0a0a0]">
          <div className="shrink-0 pl-px" style={{ width: pct(0.5) }}>00s</div>
          {Array.from({ length: 20 }, (_, i) => (
            <div key={i} className="flex shrink-0 flex-col items-center" style={{ width: pct(1) }}>
              {String(i + 1).padStart(2, '0')}s
              <div className="h-[7px] w-px bg-[#808080]" />
            </div>
          ))}
        </div>
        <div className="absolute bottom-0 -left-[5px] h-[11px] w-[5px] rounded-l-full bg-[#2d8ceb]" />
        <div className="absolute bottom-0 left-0 flex h-[11px] border-t border-[#444] bg-[#5e5e5e]" style={{ width: pct(4) }}>
          <div className="-mr-[5px] ml-auto w-1 rounded-r-sm bg-[#2d8ceb]" />
        </div>
      </div>
      <div className="h-0.5 shrink-0 bg-[#22c322]" />
      <div className="h-1 bg-[#333]" style={{ width: pct(4) }} />
      <div className="grid min-h-0 flex-1 auto-rows-fr">
        {rows.map((row, i) => (
          <div key={i} className="relative flex min-h-0 items-center border-b border-[#1f1f1f] bg-[#262626]">
            <div className="h-full bg-[#333]" style={{ width: pct(4) }} />
            {row.kind === 'layer' && (
              <>
                <div className="absolute inset-y-0 -left-1 w-1 bg-[#4a4a4a]" />
                <div className="absolute inset-x-0 inset-y-px border-t border-[#8f98d0] bg-linear-to-b from-[#6b7cdc] to-[#4a59c0]" />
              </>
            )}
            {row.kind === 'prop' && row.keyed &&
              [0, 2, 4].map((t) => (
                <div key={t} className="absolute flex -translate-x-1/2" style={{ left: pct(t) }}>
                  <Icon name="diamond" className={clsx('size-1.5', row.selected && t === 4 ? 'text-[#2d8ceb]' : 'text-[#b8b8b8]')} />
                </div>
              ))}
            {row.kind !== 'layer' && !(row.kind === 'prop' && row.keyed) && (
              <Icon name="ibeam" className="absolute left-0 size-2 -translate-x-1/2 text-[#98a8b8]" />
            )}
          </div>
        ))}
      </div>
      <div className="absolute top-5 bottom-0 left-0 w-px bg-[#2d8ceb]" />
      <svg viewBox="0 0 8 10" className="absolute top-4 left-0 h-2.5 w-2 -translate-x-1/2" fill="#2d8ceb">
        <path d="M0 1q4-2 8 0v5L4 10 0 6z" />
      </svg>
    </div>
  )
}

function Timeline() {
  return (
    <section className="flex h-[252px] shrink-0 flex-col border-x-2 border-t-2 border-[#275588] bg-[#232323] text-[#a8a8a8]">
      <div className="flex h-[17px] shrink-0 items-center pl-1.5 text-[9px] leading-none">
        <IconButton name="close" label="关闭时间轴" icon="size-1" />
        <div className="ml-2 size-2 bg-[#b59f78]" />
        <span className="ml-2 text-[#c4c4c4]">合成 1</span>
        <IconButton name="menu" label="时间轴菜单" icon="size-1.5" className="ml-2.5" />
      </div>
      <div className="flex min-h-0 flex-1">
        <Outline />
        <div className="flex w-1.5 shrink-0 border-l-2 border-[#161616]" />
        <Tracks />
        <div className="flex w-[11px] shrink-0 flex-col items-center bg-[#1e1e1e] text-[#b4b4b4]">
          <div className="flex h-[41px] w-full items-end justify-center border-b border-[#141414] bg-[#232323] pb-0.5">
            <Icon name="marker" className="size-[10px]" />
          </div>
          <Icon name="markerBin" className="mt-[3px] size-[10px]" />
          <div className="mt-auto h-20 w-2.5 rounded-full bg-[#333]" />
        </div>
      </div>
      <footer className="flex h-[13px] shrink-0 items-center border-t border-[#141414] bg-[#1e1e1e] text-[10px] leading-none">
        <div className="flex w-[394px] shrink-0 items-center pl-1">
          <IconButton name="layers" label="图层开关窗格" icon="size-[9px]" className="text-[#2d8ceb]" />
          <IconButton name="switches" label="转换控制窗格" icon="size-[9px]" className="ml-[5px]" />
          <IconButton name="inout" label="入点出点窗格" icon="size-[9px]" className="ml-[5px]" />
          <IconButton name="render" label="渲染时间窗格" icon="size-[9px]" className="ml-[5px]" />
          <span className="ml-2 text-[#c4c4c4]">帧渲染时间</span>
          <span className="ml-1 text-[#3fc9a0]">2毫秒</span>
          <button type="button" className="ml-auto h-3 w-[97px] border-x border-[#181818] bg-[#232323] text-[9px] leading-none">切换开关/模式</button>
          <div className="w-[104px]" />
        </div>
        <Icon name="mountain" className="size-1.5" />
        <input
          type="range"
          aria-label="时间缩放"
          defaultValue={30}
          className="mx-2.5 h-2 w-8 appearance-none bg-transparent [&::-webkit-slider-runnable-track]:h-px [&::-webkit-slider-runnable-track]:bg-[#555] [&::-webkit-slider-thumb]:-mt-[3px] [&::-webkit-slider-thumb]:size-[7px] [&::-webkit-slider-thumb]:appearance-none [&::-webkit-slider-thumb]:rounded-full [&::-webkit-slider-thumb]:border [&::-webkit-slider-thumb]:border-[#b4b4b4] [&::-webkit-slider-thumb]:bg-[#1e1e1e]"
        />
        <Icon name="mountain" className="size-[11px]" />
        <div className="ml-1.5 h-2.5 w-[44%] rounded-full bg-[#333]" />
      </footer>
    </section>
  )
}

export default function App() {
  return (
    <div className="flex h-screen min-h-[720px] min-w-[1200px] flex-col overflow-hidden bg-[#161616] font-['Noto_Sans_CJK_SC',sans-serif]">
      <TitleBar />
      <Toolbar />
      <main className="mb-px flex min-h-0 flex-1">
        <ProjectPanel />
        <Viewer />
        <SidePanels />
      </main>
      <Timeline />
    </div>
  )
}
